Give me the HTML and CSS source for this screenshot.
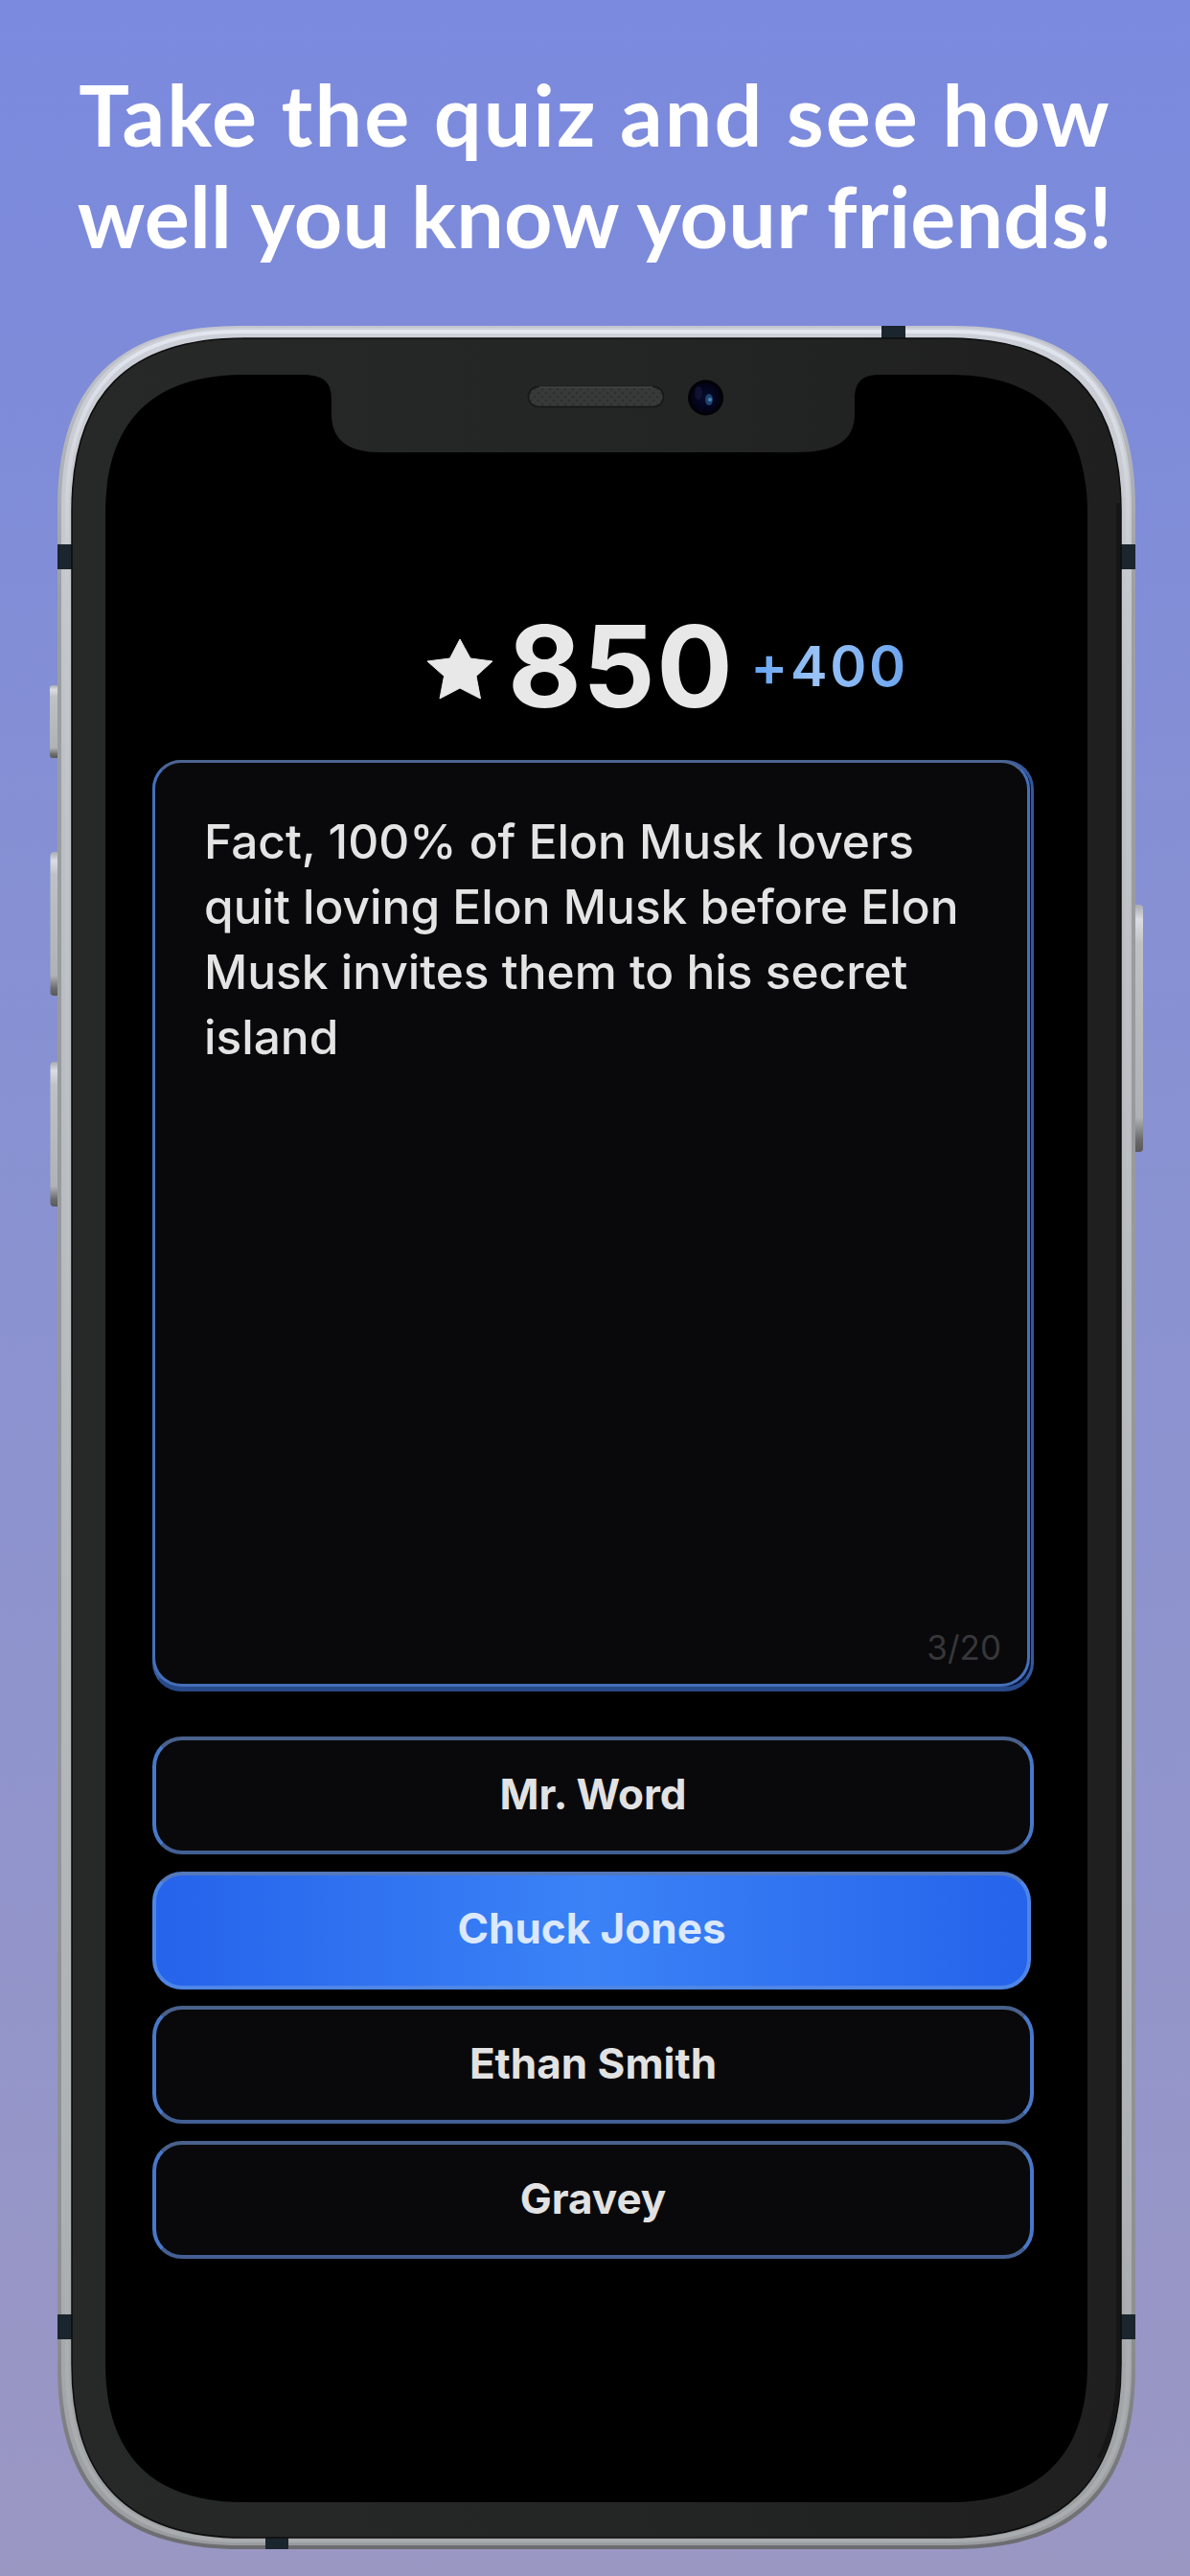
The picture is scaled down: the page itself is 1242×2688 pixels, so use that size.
FILE: index.html
```html
<!DOCTYPE html>
<html lang="en">
<head>
<meta charset="utf-8">
<meta name="viewport" content="width=1242">
<title>Friends quiz</title>
<link rel="stylesheet" href="styles.css">
</head>
<body>
<main class="poster">
  <h1 class="headline">
    <span class="line line-one">Take the quiz and see how</span>
    <span class="line line-two">well you know your friends!</span>
  </h1>

  <section class="phone">
    <svg class="shell" viewBox="0 0 1142 2320" aria-hidden="true">
      <defs>
        <linearGradient id="frame" x1="0" y1="0" x2="0" y2="1">
          <stop offset="0" stop-color="#cdd0d8"/>
          <stop offset=".2" stop-color="#bdc0c4"/>
          <stop offset=".85" stop-color="#aeb2b4"/>
          <stop offset="1" stop-color="#9a9da0"/>
        </linearGradient>
        <linearGradient id="edge" x1="0" y1="0" x2="0" y2="1">
          <stop offset="0" stop-color="#c2c5cd"/>
          <stop offset=".12" stop-color="#9c9fa2"/>
          <stop offset=".9" stop-color="#8d9092"/>
          <stop offset="1" stop-color="#6b6c70"/>
        </linearGradient>
        <linearGradient id="shine" x1="0" y1="0" x2="0" y2="1">
          <stop offset="0" stop-color="#e2e6ef"/>
          <stop offset=".12" stop-color="#c4c7cb"/>
          <stop offset="1" stop-color="#a9acae"/>
        </linearGradient>
        <linearGradient id="glass" x1="0" y1="0" x2="1" y2="0">
          <stop offset="0" stop-color="#272928"/>
          <stop offset=".5" stop-color="#242525"/>
          <stop offset="1" stop-color="#1f1f1f"/>
        </linearGradient>
        <linearGradient id="key" x1="0" y1="0" x2="0" y2="1">
          <stop offset="0" stop-color="#a8abb0"/>
          <stop offset=".06" stop-color="#dadde3"/>
          <stop offset=".16" stop-color="#bfc2c5"/>
          <stop offset=".86" stop-color="#b0b3b5"/>
          <stop offset=".95" stop-color="#6a6b6c"/>
          <stop offset="1" stop-color="#5a5a5a"/>
        </linearGradient>
        <pattern id="mesh" width="8" height="8" patternUnits="userSpaceOnUse">
          <rect width="8" height="8" fill="#383a3a"/>
          <circle cx="2" cy="2" r="1.5" fill="#2d2f30"/>
          <circle cx="6" cy="6" r="1.5" fill="#2d2f30"/>
        </pattern>
        <radialGradient id="lens">
          <stop offset="0" stop-color="#070b2c"/>
          <stop offset=".7" stop-color="#03041a"/>
          <stop offset="1" stop-color="#000"/>
        </radialGradient>
      </defs>

      <!-- side keys -->
      <rect x="0" y="375" width="14" height="76" rx="3" fill="url(#key)"/>
      <rect x="0.500" y="549" width="14" height="150" rx="4" fill="url(#key)"/>
      <rect x="0.500" y="768" width="14" height="151" rx="4" fill="url(#key)"/>
      <rect x="1128" y="604" width="13" height="258" rx="4" fill="url(#key)"/>

      <!-- metal frame -->
      <path fill="url(#edge)" d="M198 0H943C1071 0 1133 62 1133 190V2130C1133 2258 1071 2320 943 2320H198C70 2320 8 2258 8 2130V190C8 62 70 0 198 0Z"/>
      <path fill="url(#frame)" d="M198 2H943C1068 2 1129 63 1129 190V2130C1129 2255 1068 2316 943 2316H198C73 2316 12 2255 12 2130V190C12 63 73 2 198 2Z"/>
      <path fill="none" stroke="url(#shine)" stroke-width="4" d="M198 6H943C1065 6 1125 65 1125 190V2130C1125 2250 1065 2311 943 2311H198C78 2311 18 2250 18 2130V190C18 65 78 6 198 6Z"/>

      <!-- antenna bands -->
      <path fill="#1b252d" d="M868 0h25v14h-25zM8 228h15v26H8zM1118 228h15v26h-15zM8 2075h15v26H8zM1118 2075h15v26h-15zM225 2307h24v13h-24z"/>

      <!-- front glass -->
      <path fill="url(#glass)" stroke="#0c0d0d" stroke-width="1.500" d="M203 13H938C1059 13 1118 72 1118 193V2127C1118 2248 1059 2308 938 2308H203C82 2308 23 2248 23 2127V193C23 72 82 13 203 13Z"/>
      <path fill="none" stroke="#161616" stroke-width="4" d="M1115 185V2127C1115 2170 1108 2200 1095 2225"/>

      <!-- display with notch -->
      <path fill="#000" d="M203 51H262C284 51 294 57 294 77V92C294 119 311 132 345 132H779C818 132 840 121 840 92V77C840 57 849 51 867 51H938C1034 51 1083 100 1083 196V2126C1083 2222 1034 2271 938 2271H203C107 2271 58 2222 58 2126V196C58 100 107 51 203 51Z"/>

      <!-- speaker and camera -->
      <rect x="499.500" y="63.500" width="141" height="21" rx="10.500" fill="url(#mesh)" stroke="#151616" stroke-width="1.500"/>
      <path d="M511 64h118" stroke="#555756" stroke-width="1"/>
      <circle cx="684.500" cy="75" r="18.500" fill="url(#lens)"/>
      <ellipse cx="677" cy="70" rx="4" ry="7" fill="#15173a" opacity=".7"/>
      <ellipse cx="688" cy="77" rx="4" ry="6" fill="#1d4370"/>
      <circle cx="689" cy="77" r="2" fill="#4d86ad"/>
    </svg>

    <div class="app">
      <div class="score">
        <svg class="star" viewBox="0 0 68 62" aria-hidden="true">
          <path fill="#e8e8e8" d="M34 0 45 20 68 23 51 38.500 55.500 62 34 51 13 62 17.500 38.500 0 23 23.500 20Z" stroke="#e8e8e8" stroke-width="1" stroke-linejoin="round"/>
        </svg>
        <span class="total">850</span>
        <span class="bonus">+400</span>
      </div>

      <div class="deck">
        <article class="card">
          <p class="quote">Fact, 100% of Elon Musk lovers quit loving Elon Musk before Elon Musk invites them to his secret island</p>
          <span class="count">3/20</span>
        </article>
      </div>

      <div class="answers">
        <button class="answer">Mr. Word</button>
        <button class="answer picked">Chuck Jones</button>
        <button class="answer">Ethan Smith</button>
        <button class="answer">Gravey</button>
      </div>
    </div>
  </section>
</main>
</body>
</html>
```

FILE: styles.css
```css
* {
  box-sizing: border-box;
}

body {
  margin: 0;
  font-family: Inter, "Liberation Sans", sans-serif;
}

.poster {
  display: flex;
  flex-direction: column;
  gap: 62px;
  width: 1242px;
  height: 2688px;
  padding: 66px 0 0;
  overflow: hidden;
  background: linear-gradient(#7b8adf 0%, #7e8bd9 14%, #8590d4 32%, #8f94cd 65%, #9896c5 92%, #9a97c3 100%);
}

.headline {
  display: flex;
  flex-direction: column;
  align-items: center;
  margin: 0;
  color: #fff;
  font: 700 88px/106px Lato, "Open Sans", sans-serif;
}

.line {
  white-space: nowrap;
}

.line-one {
  letter-spacing: 2.100px;
}

.line-two {
  letter-spacing: 0.200px;
}

.phone {
  position: relative;
  width: 1142px;
  height: 2320px;
  margin-left: 52px;
  padding: 296px 115px 0 107px;
}

.shell {
  position: absolute;
  inset: 0;
  width: 1142px;
  height: 2320px;
}

.app {
  position: relative;
  display: flex;
  flex-direction: column;
}

.score {
  display: flex;
  align-items: baseline;
  height: 118px;
  padding-left: 287px;
  font-weight: 600;
  line-height: 118px;
  white-space: nowrap;
}

.star {
  align-self: flex-start;
  width: 68px;
  height: 62px;
  margin-top: 31px;
  overflow: visible;
}

.total {
  margin-left: 16px;
  color: #e8e8e8;
  font-size: 118px;
  font-weight: 650;
  letter-spacing: 1.500px;
}

.bonus {
  align-self: flex-start;
  margin: 0 0 0 17px;
  background: linear-gradient(90deg, #68a6f2 5%, #9ac3f6 42%, #6aa3ee 100%);
  -webkit-background-clip: text;
  background-clip: text;
  color: transparent;
  font-size: 58px;
  letter-spacing: 2.600px;
}

.deck {
  width: 920px;
  height: 972px;
  margin-top: 39px;
  padding: 0 4px 5px 0;
  border: 3px solid #34589c;
  border-bottom: 5px solid #27498a;
  border-radius: 30px;
  background: #02102f;
}

.card {
  position: relative;
  width: 916px;
  height: 967px;
  margin: -3px 0 0 -3px;
  padding: 48px 50px;
  border: 3px solid #456fb9;
  border-top-color: #4c648f;
  border-radius: 30px;
  background: #09090b;
}

.quote {
  width: 820px;
  margin: 0;
  padding-left: 1px;
  color: #e4e4e4;
  font-size: 49.600px;
  font-weight: 530;
  line-height: 68px;
}

.count {
  position: absolute;
  right: 27px;
  bottom: 17px;
  color: #37373a;
  font-size: 35px;
  line-height: 42px;
}

.answers {
  display: flex;
  flex-direction: column;
  gap: 17.700px;
  margin-top: 47px;
}

.answer {
  width: 920px;
  height: 123px;
  padding: 0 0 3px;
  border: 4px solid #4878c8;
  border-top-color: #49618b;
  border-bottom-color: #435f93;
  border-radius: 31px;
  background: #09090b;
  color: #e2e2e2;
  font: 700 44px/53px Inter, sans-serif;
  text-align: center;
}

.picked {
  width: 917px;
  border-color: #4e86e6;
  border-top-color: #5478bb;
  background: linear-gradient(90deg, #2563eb, #3b82f6 50%, #2563eb) border-box;
  color: #dbe8fd;
}
```
